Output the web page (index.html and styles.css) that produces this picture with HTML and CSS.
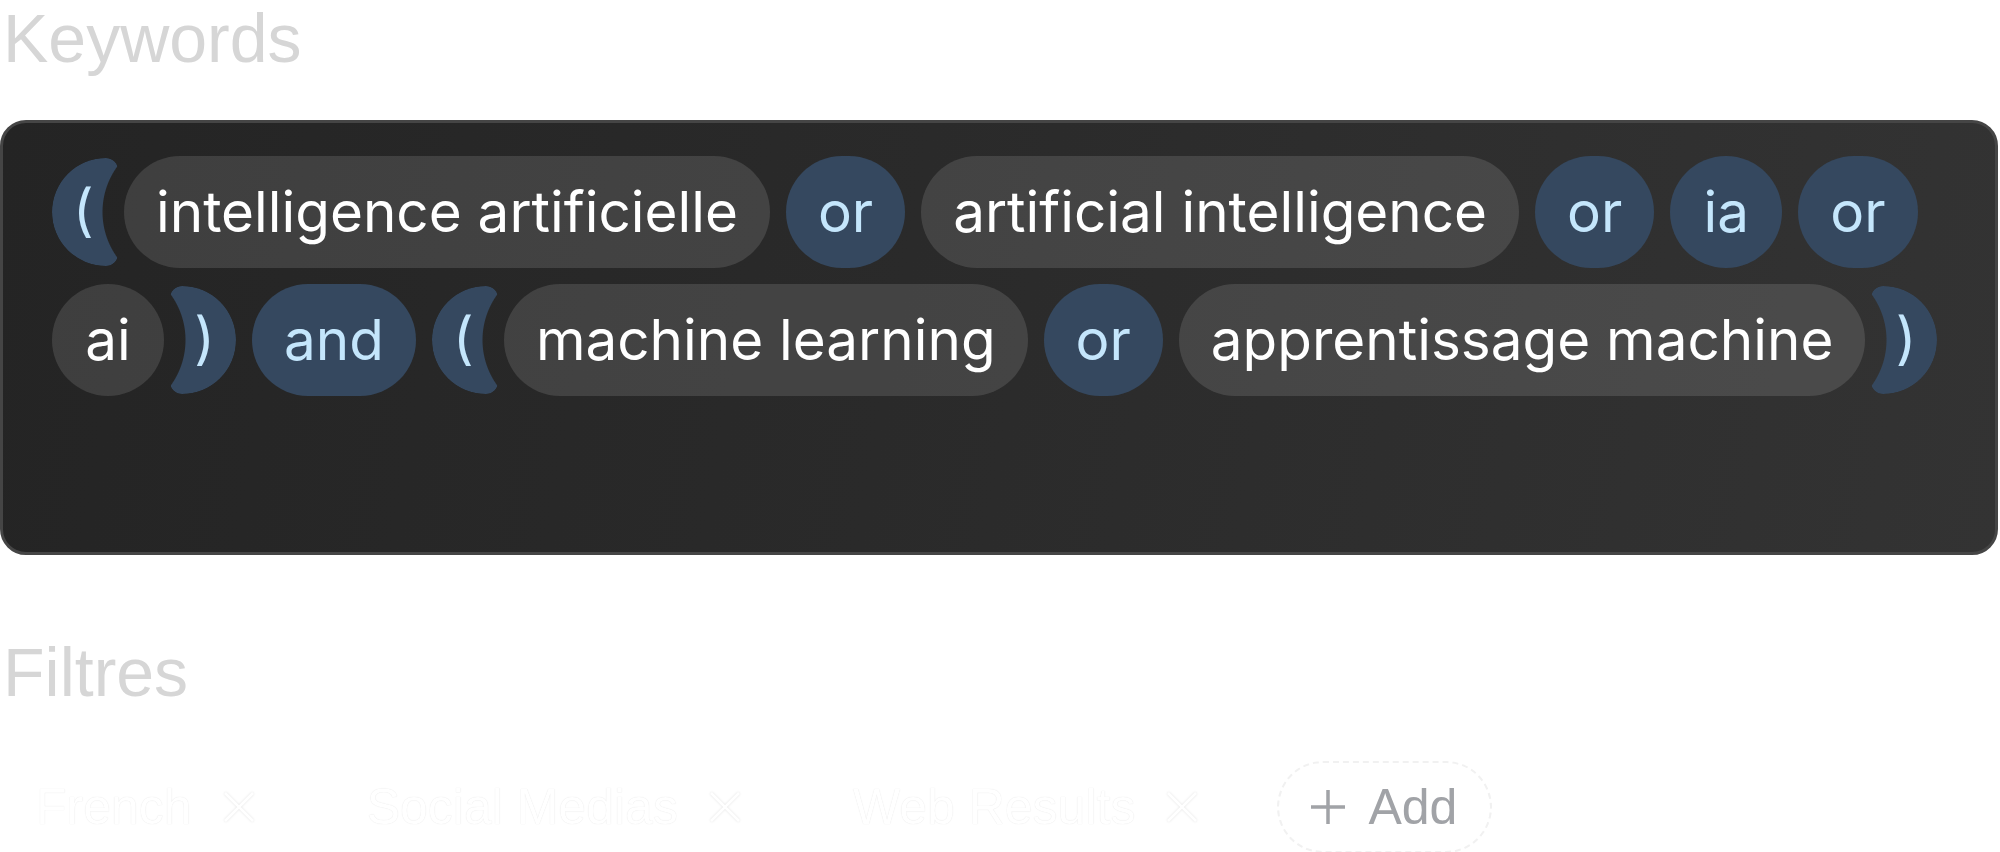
FILE: index.html
```html
<html>
  <head>
    <title>Keywords</title>
    <link rel="stylesheet" href="styles.css">
  </head>
<body>
  <section class="field">
    <h2 class="field-title">Keywords</h2>
    <div class="query">
      <span class="paren open">(</span>
      <span class="term">intelligence artificielle</span>
      <span class="op">or</span>
      <span class="term">artificial intelligence</span>
      <span class="op">or</span>
      <span class="op">ia</span>
      <span class="op">or</span>
      <span class="term">ai</span>
      <span class="paren close">)</span>
      <span class="op">and</span>
      <span class="paren open">(</span>
      <span class="term">machine learning</span>
      <span class="op">or</span>
      <span class="term">apprentissage machine</span>
      <span class="paren close">)</span>
    </div>
  </section>

  <section class="field">
    <h2 class="field-title filters-title">Filtres</h2>
    <div class="filters">
      <span class="filter">French
        <svg class="remove" viewBox="0 0 32 32"><path d="M2 2 L30 30 M30 2 L2 30"/></svg>
      </span>
      <span class="filter">Social Medias
        <svg class="remove" viewBox="0 0 32 32"><path d="M2 2 L30 30 M30 2 L2 30"/></svg>
      </span>
      <span class="filter">Web Results
        <svg class="remove" viewBox="0 0 32 32"><path d="M2 2 L30 30 M30 2 L2 30"/></svg>
      </span>
      <button class="add">
        <svg class="plus" viewBox="0 0 36 36"><path d="M18 1 V35 M1 18 H35"/></svg>
        Add
      </button>
    </div>
  </section>
</body>
</html>
```

FILE: styles.css
```css
body { margin:0; background:#fff; font-family:"Liberation Sans", Arial, sans-serif; }

.field-title { margin:0 0 43px 3px; font-size:68px; font-weight:normal; line-height:77px; color:#d6d6d6; }
.filters-title { margin-top:79px; margin-bottom:50px; }

/* keyword query box */
.query { box-sizing:border-box; height:435px; margin-right:2px; padding:33px 40px 0 49px;
         border:3px solid #454545; border-radius:26px;
         background:linear-gradient(100deg, #242424 0%, #2a2a2a 45%, #333 100%);
         display:flex; flex-wrap:wrap; align-content:flex-start; align-items:center; gap:16px;
         font-family:Inter, "Noto Sans", sans-serif; font-size:56.6px; }

.term, .op { box-sizing:border-box; height:112px; min-width:112px; padding:0 32px; border-radius:56px;
             line-height:112px; text-align:center; white-space:nowrap; }
.term { background:rgba(255,255,255,0.12); color:#fff; }
.op { background:#35485f; color:#c4e6fc; }

.paren { box-sizing:border-box; width:66px; height:108px; line-height:104px; background:#35485f; color:#c4e6fc; }
.paren.open { margin-right:-10px; padding-left:21px; text-align:left;
              border-radius:54px 12px 12px 54px / 54px 12px 12px 54px;
              -webkit-mask-image:radial-gradient(circle 78px at 128px 50%, transparent 77px, #000 78px);
              mask-image:radial-gradient(circle 78px at 128px 50%, transparent 77px, #000 78px); }
.paren.close { margin-left:-10px; padding-right:21px; text-align:right;
               border-radius:12px 54px 54px 12px / 12px 54px 54px 12px;
               -webkit-mask-image:radial-gradient(circle 78px at -62px 50%, transparent 77px, #000 78px);
               mask-image:radial-gradient(circle 78px at -62px 50%, transparent 77px, #000 78px); }

/* filter chips */
.filters { display:flex; align-items:center; gap:46px; padding-left:3px; font-size:50px; }
.filter { display:flex; align-items:center; gap:31px; height:92px; padding:0 33px;
          color:#fff; text-shadow:0 0 1px rgba(0,0,0,0.14); }
.remove { width:32px; height:32px; fill:none; stroke:#fff; stroke-width:2.5;
          filter:drop-shadow(0 0 1px rgba(0,0,0,0.12)); }

.add { display:flex; align-items:center; gap:22px; box-sizing:border-box; height:92px; padding:0 33px 0 31px;
       border:2px dashed #f1f1f1; border-radius:46px; background:none;
       font-family:"Liberation Sans", Arial, sans-serif; font-size:50px; color:#a1a3a7; }
.plus { width:36px; height:36px; fill:none; stroke:#a1a3a7; stroke-width:3.5; }
```
